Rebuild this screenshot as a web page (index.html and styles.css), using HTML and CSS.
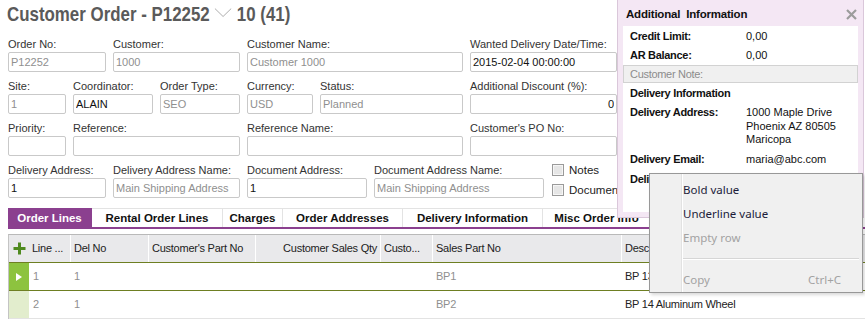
FILE: index.html
```html
<!DOCTYPE html>
<html>
<head>
    <title>Customer Order</title>
    <link rel="stylesheet" href="styles.css">
</head>
<body>
    <div class="page">
        <div class="title-bar">
            <h1 class="title">Customer Order - P12252<svg class="chev" width="21" height="10" viewBox="0 0 21 10"><polyline points="0.5,0.5 10.5,8.5 20.5,0.5" fill="none" stroke="#a5a5a5" stroke-width="1"/></svg>10 (41)</h1>
        </div>

        <form class="order-form">
            <div class="row">
                <div class="field w98"><label>Order No:</label><input class="ro" value="P12252" readonly></div>
                <div class="field w127"><label>Customer:</label><input class="ro" value="1000" readonly></div>
                <div class="field w216"><label>Customer Name:</label><input class="ro" value="Customer 1000" readonly></div>
                <div class="field w147"><label>Wanted Delivery Date/Time:</label><input value="2015-02-04 00:00:00"></div>
            </div>

            <div class="row">
                <div class="field w58"><label>Site:</label><input class="ro" value="1" readonly></div>
                <div class="field w80"><label>Coordinator:</label><input value="ALAIN"></div>
                <div class="field w80"><label>Order Type:</label><input class="ro" value="SEO" readonly></div>
                <div class="field w66"><label>Currency:</label><input class="ro" value="USD" readonly></div>
                <div class="field w143"><label>Status:</label><input class="ro" value="Planned" readonly></div>
                <div class="field w147"><label>Additional Discount (%):</label><input class="num" value="0"></div>
            </div>

            <div class="row">
                <div class="field w58"><label>Priority:</label><input value=""></div>
                <div class="field w167"><label>Reference:</label><input value=""></div>
                <div class="field w216"><label>Reference Name:</label><input value=""></div>
                <div class="field w147"><label>Customer's PO No:</label><input value=""></div>
            </div>

            <div class="row">
                <div class="field w98"><label>Delivery Address:</label><input value="1"></div>
                <div class="field w127"><label>Delivery Address Name:</label><input class="ro" value="Main Shipping Address" readonly></div>
                <div class="field w120"><label>Document Address:</label><input value="1"></div>
                <div class="field w170"><label>Document Address Name:</label><input class="ro" value="Main Shipping Address" readonly></div>
                <div class="checks">
                    <div class="check"><span class="box"></span>Notes</div>
                    <div class="check"><span class="box"></span>Documents</div>
                </div>
            </div>
        </form>

        <div class="tabs">
            <div class="tab active" style="width:84px">Order Lines</div>
            <div class="tab" style="width:131px">Rental Order Lines</div>
            <div class="tab" style="width:60px">Charges</div>
            <div class="tab" style="width:120px">Order Addresses</div>
            <div class="tab" style="width:140px">Delivery Information</div>
            <div class="tab" style="width:108px">Misc Order Info</div>
        </div>

        <div class="grid">
            <div class="grid-row head">
                <div class="cell ind"><svg width="13" height="13" viewBox="0 0 13 13"><path d="M6.5 0.5v12M0.5 6.5h12" stroke="#4f8a1f" stroke-width="3"/></svg></div>
                <div class="cell">Line ...</div>
                <div class="cell sep">Del No</div>
                <div class="cell sep">Customer's Part No</div>
                <div class="cell sep right">Customer Sales Qty</div>
                <div class="cell sep">Custo...</div>
                <div class="cell sep">Sales Part No</div>
                <div class="cell sep">Description</div>
            </div>
            <div class="grid-row current">
                <div class="cell ind"><span class="arrow"></span></div>
                <div class="cell dim">1</div>
                <div class="cell dim">1</div>
                <div class="cell"></div>
                <div class="cell"></div>
                <div class="cell"></div>
                <div class="cell dim">BP1</div>
                <div class="cell">BP 13 Aluminum Wheel</div>
            </div>
            <div class="grid-row">
                <div class="cell ind"></div>
                <div class="cell dim">2</div>
                <div class="cell dim">1</div>
                <div class="cell"></div>
                <div class="cell"></div>
                <div class="cell"></div>
                <div class="cell dim">BP2</div>
                <div class="cell">BP 14 Aluminum Wheel</div>
            </div>
        </div>
    </div>

    <div class="info-panel">
        <div class="info-head">
            Additional Information
            <svg class="close" width="11" height="11" viewBox="0 0 11 11"><path d="M1 1l9 9M10 1l-9 9" stroke="#9c9c9c" stroke-width="2.2"/></svg>
        </div>
        <div class="info-body">
            <div class="info-row"><span class="info-label">Credit Limit:</span>0,00</div>
            <div class="info-row"><span class="info-label">AR Balance:</span>0,00</div>
            <div class="note">Customer Note:</div>
            <div class="info-row"><span class="info-label">Delivery Information</span></div>
            <div class="info-row multi"><span class="info-label">Delivery Address:</span><span>1000 Maple Drive<br>Phoenix AZ 80505<br>Maricopa</span></div>
            <div class="info-row"><span class="info-label">Delivery Email:</span>maria@abc.com</div>
            <div class="info-row"><span class="info-label">Delivery Phone:</span>+1 602 555 1212</div>
        </div>
    </div>

    <div class="menu">
        <div class="menu-item">Bold value</div>
        <div class="menu-item">Underline value</div>
        <div class="menu-item off">Empty row</div>
        <div class="menu-sep"></div>
        <div class="menu-item off">Copy<span class="key">Ctrl+C</span></div>
    </div>
</body>
</html>
```

FILE: styles.css
```css
body {
    margin: 0;
    width: 865px;
    height: 321px;
    overflow: hidden;
    position: relative;
    background-color: #ffffff;
    font-family: "Liberation Sans", Arial, sans-serif;
    font-size: 11px;
    color: #333333;
}

.page {
    padding-left: 8px;
    width: 1000px;
}

.title-bar {
    height: 36px;
}

.title {
    display: inline-block;
    margin: 0 0 0 -1px;
    line-height: 28px;
    font-family: "Liberation Sans", Arial, sans-serif;
    font-size: 20.6px;
    font-weight: bold;
    color: #5a5a5a;
    white-space: nowrap;
    transform: scaleX(0.82);
    transform-origin: left top;
}

.chev {
    margin: 0 6px 0 6px;
    vertical-align: 3px;
}

/* form */

.row {
    display: flex;
    gap: 7px;
    margin-bottom: 6px;
}

.field label {
    display: block;
    height: 16px;
    line-height: 16px;
    white-space: nowrap;
}

.field input {
    display: block;
    box-sizing: border-box;
    width: 100%;
    height: 20px;
    margin: 0;
    padding: 0 2px;
    border: 1px solid #c9c9c9;
    border-radius: 2px;
    background-color: #ffffff;
    font-family: "Liberation Sans", Arial, sans-serif;
    font-size: 11px;
    color: #111111;
    outline: none;
}

.field input.ro {
    color: #8f8f8f;
}

.field input.num {
    text-align: right;
}

.w58 { width: 58px; }
.w66 { width: 66px; }
.w80 { width: 80px; }
.w98 { width: 98px; }
.w120 { width: 120px; }
.w127 { width: 127px; }
.w143 { width: 143px; }
.w147 { width: 147px; }
.w167 { width: 167px; }
.w170 { width: 170px; }
.w216 { width: 216px; }

.checks {
    margin: -2px 0 0 1px;
}

.check {
    display: flex;
    align-items: center;
    gap: 5px;
    height: 20px;
    font-size: 11.5px;
    color: #222222;
}

.box {
    box-sizing: border-box;
    width: 12px;
    height: 12px;
    border: 1px solid #9a9a9a;
    background-color: #e6e6e6;
    box-shadow: inset 0 0 0 1px #f6f6f6;
}

/* tabs */

.tabs {
    display: flex;
    margin-top: 8px;
    height: 19px;
    border-bottom: 2px solid #8b408f;
}

.tab {
    box-sizing: border-box;
    height: 19px;
    border-top: 1px solid #e3e3e3;
    border-right: 1px solid #e3e3e3;
    line-height: 18px;
    text-align: center;
    font-size: 11.5px;
    font-weight: bold;
    color: #111111;
    white-space: nowrap;
    overflow: hidden;
}

.tab.active {
    background-color: #8b408f;
    border-color: #8b408f;
    color: #ffffff;
}

/* grid */

.grid {
    margin-top: 5px;
    border-top: 1px solid #b9b9b9;
    border-left: 1px solid #c4c4c4;
    letter-spacing: -0.25px;
}

.grid-row {
    display: grid;
    grid-template-columns: 20px 41px 78px 107px 125px 52px 189px 300px;
    height: 27px;
    border-bottom: 1px solid #e3e3e3;
}

.grid-row.head {
    background-color: #e9e9eb;
    border-bottom-color: #6e7f22;
    color: #333333;
}

.grid-row.current {
    border-bottom-color: #6e7f22;
}

.cell {
    box-sizing: border-box;
    padding: 0 4px;
    line-height: 26px;
    white-space: nowrap;
    overflow: hidden;
    color: #222222;
}

.head .cell {
    padding: 0 3px;
}

.head .cell.sep {
    border-left: 1px solid #ffffff;
}

.cell.right {
    text-align: right;
}

.cell.dim {
    color: #8f8f8f;
}

.cell.ind {
    padding: 0;
    display: flex;
    align-items: center;
    justify-content: center;
    background-color: #e2edcd;
}

.head .cell.ind {
    background-color: #e9e9eb;
}

.current .cell.ind {
    background-color: #8dc33f;
}

.arrow {
    width: 0;
    height: 0;
    border-top: 4px solid transparent;
    border-bottom: 4px solid transparent;
    border-left: 6px solid #ffffff;
}

/* additional information panel */

.info-panel {
    position: absolute;
    left: 617px;
    top: -1px;
    box-sizing: border-box;
    width: 247px;
    height: 219px;
    border: 1px solid #dac7da;
    background-color: #f4e7f4;
}

.info-head {
    position: relative;
    height: 26px;
    padding: 2px 0 0 8px;
    box-sizing: border-box;
    line-height: 24px;
    font-size: 11.5px;
    font-weight: bold;
    letter-spacing: -0.2px;
    word-spacing: 3px;
    color: #111111;
}

.close {
    position: absolute;
    right: 6px;
    top: 9px;
}

.info-body {
    margin: 0 5px;
    height: 186px;
    background-color: #ffffff;
    color: #111111;
}

.info-row {
    display: flex;
    align-items: center;
    height: 19px;
    padding-left: 7px;
    white-space: nowrap;
}

.info-label {
    width: 116px;
    font-weight: bold;
    letter-spacing: -0.3px;
}

.note {
    box-sizing: border-box;
    height: 18px;
    margin-top: 1px;
    padding-left: 6px;
    line-height: 16px;
    border: 1px solid #d2d2d2;
    background-color: #f0f0f0;
    color: #8c8c8c;
    letter-spacing: -0.3px;
}

.note + .info-row {
    height: 20px;
}

.info-row.multi {
    align-items: flex-start;
    height: auto;
    padding-top: 3px;
    padding-bottom: 2px;
    line-height: 13.5px;
}

.info-row.multi + .info-row,
.info-row.multi + .info-row + .info-row {
    height: 20px;
}

/* context menu */

.menu {
    position: absolute;
    left: 649px;
    top: 173px;
    box-sizing: border-box;
    width: 214px;
    height: 120px;
    padding-top: 4px;
    border: 1px solid #989898;
    background: linear-gradient(to right, #f0f0f0 0 31px, #e2e2e2 31px 32px, #ffffff 32px 33px, #f0f0f0 33px);
    box-shadow: 2px 2px 3px rgba(0, 0, 0, 0.15);
    font-family: "Noto Sans", "Open Sans", sans-serif;
    font-size: 11.5px;
    color: #1c1c3a;
}

.menu-item {
    display: flex;
    justify-content: space-between;
    height: 24px;
    line-height: 24px;
    padding: 0 21px 0 33px;
}

.menu-item.off {
    color: #a2a2a2;
}

.menu-sep {
    height: 18px;
    margin: 0 3px 0 33px;
    box-sizing: border-box;
    padding-top: 8px;
}

.menu-sep::before {
    content: "";
    display: block;
    height: 1px;
    background-color: #d6d6d6;
    border-bottom: 1px solid #ffffff;
}
```
